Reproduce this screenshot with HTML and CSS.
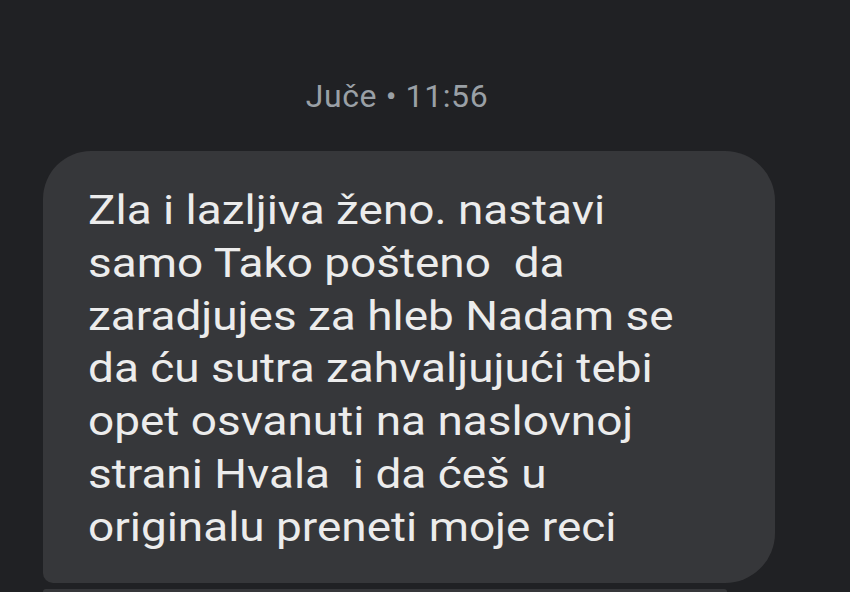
FILE: index.html
```html
<!DOCTYPE html>
<html lang="sr">
<head>
    <meta charset="UTF-8">
    <meta name="viewport" content="width=device-width, initial-scale=1.0">
    <title>Poruke</title>
    <link rel="stylesheet" href="styles.css">
</head>
<body>
    <div class="thread">
        <div class="stamp">Juče • 11:56</div>

        <div class="bubble first">
            <p>Zla i lazljiva ženo. nastavi<br>
            samo Tako pošteno&nbsp; da<br>
            zaradjujes za hleb Nadam se<br>
            da ću sutra zahvaljujući tebi<br>
            opet osvanuti na naslovnoj<br>
            strani Hvala&nbsp; i da ćeš u<br>
            originalu preneti moje reci</p>
        </div>

        <div class="bubble next"></div>
    </div>
</body>
</html>
```

FILE: styles.css
```css
html, body {
    margin: 0;
    height: 100%;
    overflow: hidden;
}

body {
    font-family: Roboto, "Noto Sans", Arial, sans-serif;
    background-color: #202124;
    color: #ececec;
}

.thread {
    padding: 74px 75px 0 43px;
}

.stamp {
    text-align: center;
    font-size: 32px;
    letter-spacing: 0.6px;
    color: #9aa0a6;
    padding-right: 24px;
    line-height: 44px;
}

.bubble {
    background: #36373a;
    border-radius: 48px 50px 50px 10px;
}

.bubble.first {
    margin-top: 33px;
    padding: 33px 40px 0 45px;
    height: 399px;
}

.bubble p {
    margin: 0;
    font-size: 41px;
    line-height: 52.8px;
    white-space: nowrap;
    transform: scaleX(1.12);
    transform-origin: left top;
}

.bubble.next {
    margin-top: 6px;
    height: 3px;
    width: 684px;
    border-radius: 10px 10px 0 0;
}
```
